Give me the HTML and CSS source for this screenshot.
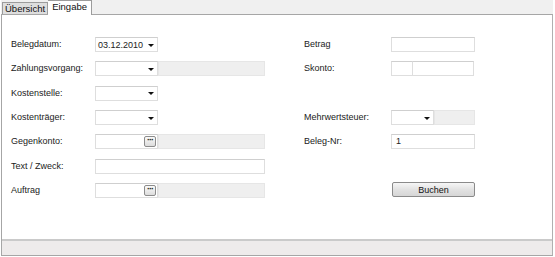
FILE: index.html
```html
<!doctype html>
<html lang="de">

<head>
  <meta charset="UTF-8" />
  <meta name="viewport" content="width=device-width, initial-scale=1.0" />
  <title>Eingabe</title>
  <link rel="stylesheet" href="styles.css">
</head>

<body>
  <div class="window">
    <div class="tabs">
      <div class="tab">Übersicht</div>
      <div class="tab active">Eingabe</div>
    </div>

    <div class="panel">
      <div class="form">
        <!-- linke Spalte -->
        <div class="column left">
          <label>Belegdatum:</label>
          <div class="field">
            <div class="combo"><span>03.12.2010</span><i class="arrow"></i></div>
          </div>

          <label>Zahlungsvorgang:</label>
          <div class="field">
            <div class="combo"><span></span><i class="arrow"></i></div>
            <div class="readonly"></div>
          </div>

          <label>Kostenstelle:</label>
          <div class="field">
            <div class="combo"><span></span><i class="arrow"></i></div>
          </div>

          <label>Kostenträger:</label>
          <div class="field">
            <div class="combo"><span></span><i class="arrow"></i></div>
          </div>

          <label>Gegenkonto:</label>
          <div class="field">
            <div class="combo picker"><span></span><b class="dots">···</b></div>
            <div class="readonly"></div>
          </div>

          <label>Text / Zweck:</label>
          <div class="field">
            <div class="input wide"></div>
          </div>

          <label>Auftrag</label>
          <div class="field">
            <div class="combo picker"><span></span><b class="dots">···</b></div>
            <div class="readonly"></div>
          </div>
        </div>

        <!-- rechte Spalte -->
        <div class="column right">
          <label>Betrag</label>
          <div class="field"><div class="input full"></div></div>

          <label>Skonto:</label>
          <div class="field">
            <div class="input small"></div>
            <div class="input rest"></div>
          </div>

          <label></label>
          <div class="field"></div>

          <label>Mehrwertsteuer:</label>
          <div class="field">
            <div class="combo short"><span></span><i class="arrow"></i></div>
            <div class="readonly short"></div>
          </div>

          <label>Beleg-Nr:</label>
          <div class="field"><div class="input full">1</div></div>

          <label></label>
          <div class="field"></div>

          <label></label>
          <div class="field"><button class="button">Buchen</button></div>
        </div>
      </div>

      <div class="status"></div>
    </div>
  </div>
</body>

</html>
```

FILE: styles.css
```css
body {
  margin: 0;
  background: #fff;
  font-family: "Liberation Sans", Arial, sans-serif;
  font-size: 9px;
  color: #222;
}

.window {
  width: 552px;
  margin-left: 1px;
}

.tabs {
  display: flex;
  align-items: flex-end;
  height: 14px;
  padding-left: 1px;
  background: #f0f0f0;
}

.tab {
  height: 11px;
  padding: 0 2px 0 2px;
  line-height: 12px;
  font-size: 9.5px;
  background: #dedede;
  border: 1px solid #9c9c9c;
  border-bottom: none;
  color: #111;
}

.tab.active {
  position: relative;
  z-index: 1;
  height: 14px;
  margin-bottom: -1px;
  padding: 0 4px 0 4px;
  line-height: 12px;
  background: #fff;
  border-left: none;
}

.panel {
  height: 240px;
  display: flex;
  flex-direction: column;
  border: 1px solid #a6a6a6;
  border-right-color: #b0b0b0;
}

.form {
  flex: 1;
  display: flex;
  gap: 39px;
  padding: 22px 0 0 9px;
}

.column {
  display: grid;
  grid-auto-rows: 24.35px;
  align-items: start;
}

.column.left {
  grid-template-columns: 84px 170px;
}

.column.right {
  grid-template-columns: 87px 84px;
}

label {
  line-height: 15px;
}

.field {
  display: flex;
  height: 15px;
}

.combo,
.input,
.readonly {
  box-sizing: border-box;
  height: 15px;
  border: 1px solid #dedede;
  border-top-color: #cfcfcf;
  background: #fff;
}

.combo {
  width: 63px;
  display: flex;
  align-items: center;
  justify-content: space-between;
  padding: 0 3px 0 2px;
  font-size: 9px;
}

.combo.short {
  width: 43px;
}

.arrow {
  width: 0;
  height: 0;
  border-left: 3px solid transparent;
  border-right: 3px solid transparent;
  border-top: 3px solid #111;
  margin-top: 1px;
}

.combo.picker {
  padding-right: 0;
}

.dots {
  box-sizing: border-box;
  width: 12px;
  height: 11px;
  margin-right: 1px;
  border: 1px solid #8c8c8c;
  border-radius: 2px;
  background: linear-gradient(#fafafa, #dcdcdc);
  font-size: 9px;
  line-height: 6px;
  text-align: center;
  letter-spacing: -1px;
  color: #222;
}

.readonly {
  width: 107px;
  background: #efefef;
  border-color: #e6e6e6;
}

.readonly.short {
  width: 41px;
}

.input {
  padding-left: 4px;
  line-height: 13px;
  font-size: 9px;
}

.input.wide {
  width: 170px;
}

.input.full {
  width: 84px;
}

.input.small {
  width: 22px;
}

.input.rest {
  width: 62px;
  margin-left: -1px;
}

.button {
  box-sizing: border-box;
  width: 83px;
  height: 15px;
  margin: -1px 0 0 1px;
  padding: 0;
  border: 1px solid #8a8a8a;
  border-radius: 2px;
  background: linear-gradient(#f6f6f6, #e2e2e2 50%, #d6d6d6);
  font-family: "Liberation Sans", Arial, sans-serif;
  font-size: 9px;
  color: #111;
}

.status {
  height: 14px;
  border-top: 2px solid #cacaca;
  background: #eeebeb;
}
```
